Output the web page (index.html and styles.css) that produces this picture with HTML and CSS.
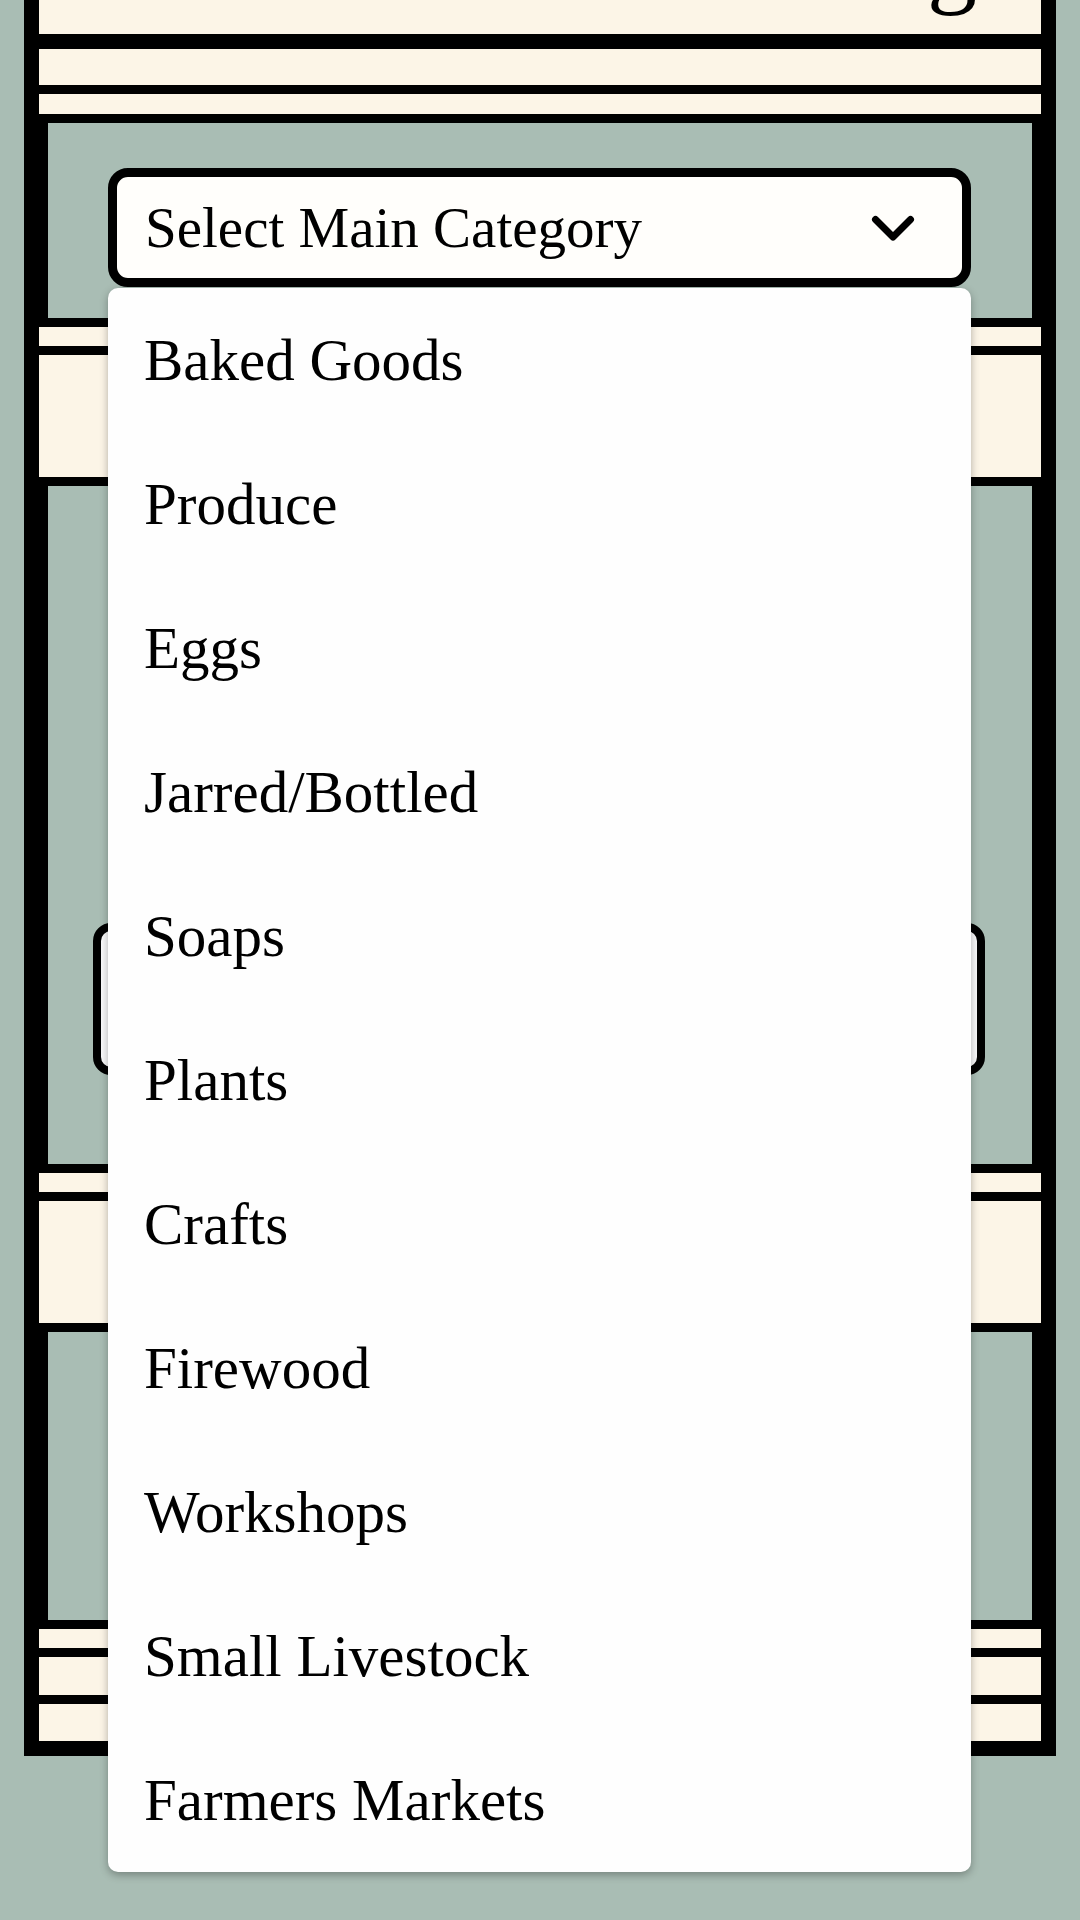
FILE: index.html
```html
<!DOCTYPE html>
<html lang="en">
<head>
<meta charset="utf-8">
<title>Create Listing</title>
<link rel="stylesheet" href="styles.css">
</head>
<body>
<div class="page">
  <div class="frame">
    <header class="header">
      <h1 class="title">Create Listing</h1>
    </header>
    <div class="band band-36"></div>
    <div class="band band-20"></div>
    <section class="panel panel-select">
      <div class="select-wrap">
        <div class="select">
          <span class="select-label">Select Main Category</span>
          <svg class="chevron" width="48" height="30" viewBox="0 0 48 30" aria-hidden="true">
            <polyline points="6.5,6.5 24,24 41.5,6.5" fill="none" stroke="#000" stroke-width="7" stroke-linecap="round" stroke-linejoin="round"/>
          </svg>
        </div>
        <ul class="menu">
          <li class="menu-item">Baked Goods</li>
          <li class="menu-item">Produce</li>
          <li class="menu-item">Eggs</li>
          <li class="menu-item">Jarred/Bottled</li>
          <li class="menu-item">Soaps</li>
          <li class="menu-item">Plants</li>
          <li class="menu-item">Crafts</li>
          <li class="menu-item">Firewood</li>
          <li class="menu-item">Workshops</li>
          <li class="menu-item">Small Livestock</li>
          <li class="menu-item">Farmers Markets</li>
        </ul>
      </div>
    </section>
    <div class="band band-19"></div>
    <div class="band band-122"></div>
    <section class="panel panel-main">
      <div class="field-box"></div>
    </section>
    <div class="band band-19"></div>
    <div class="band band-122"></div>
    <section class="panel panel-small"></section>
    <div class="band band-19"></div>
    <div class="band band-38"></div>
    <div class="band band-37"></div>
  </div>
</div>
</body>
</html>
```

FILE: styles.css
```css
* {
  box-sizing: border-box;
}

html, body {
  margin: 0;
  padding: 0;
}

body {
  background: #a9bdb4;
  font-family: "Liberation Serif", "Times New Roman", serif;
  color: #000;
  height: 1920px;
  overflow: hidden;
}

.page {
  margin-top: -123px;
  padding: 0 24px;
}

.frame {
  border: 15px solid #000;
  background: #000;
  display: flex;
  flex-direction: column;
  gap: 9px;
}

.header {
  background: #fcf5e7;
  padding: 20px 64px 22px 40px;
  margin-bottom: 6px;
}

.title {
  margin: 0;
  font-size: 100px;
  line-height: 100px;
  font-weight: 400;
  text-align: right;
}

.band {
  background: #fcf5e7;
}

.band-19 { height: 19px; }
.band-20 { height: 20px; }
.band-36 { height: 36px; }
.band-37 { height: 37px; }
.band-38 { height: 38px; }
.band-122 { height: 122px; }

.panel {
  background: #a9bdb4;
  margin: 0 9px;
}

.panel-select {
  padding: 45px 61px 31px 60px;
}

.panel-main {
  height: 678px;
  padding: 437px 47px 0 45px;
}

.panel-small {
  height: 288px;
}

.select-wrap {
  position: relative;
}

.select {
  height: 119px;
  border: 9px solid #000;
  border-radius: 20px;
  background: #fffefb;
  display: flex;
  align-items: center;
  justify-content: space-between;
  padding: 0 45px 0 28px;
}

.select-label {
  font-size: 57px;
  line-height: 1;
}

.chevron {
  display: block;
}

.field-box {
  height: 152px;
  border: 8px solid #000;
  border-radius: 18px;
  background: #f9f9fa;
}

.menu {
  position: absolute;
  top: calc(100% + 1px);
  left: 0;
  right: 0;
  margin: 0;
  padding: 0;
  list-style: none;
  background: #fefefe;
  border-radius: 10px;
  box-shadow: 0 3px 8px rgba(0, 0, 0, 0.3);
  z-index: 10;
}

.menu-item {
  height: 144px;
  display: flex;
  align-items: center;
  padding-left: 36px;
  font-size: 59px;
  line-height: 1;
}
```
